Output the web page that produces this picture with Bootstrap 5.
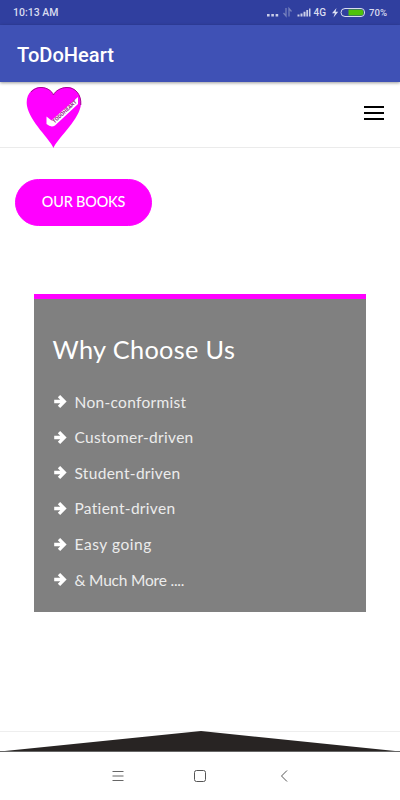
<!DOCTYPE html>
<html lang="en">
<head>
<meta charset="utf-8">
<meta name="viewport" content="width=device-width, initial-scale=1">
<title>ToDoHeart</title>
<link href="https://cdn.jsdelivr.net/npm/bootstrap@5.3.0/dist/css/bootstrap.min.css" rel="stylesheet">
<style>
body { font-family: Lato, "Liberation Sans", sans-serif; height: 800px; overflow: hidden; background: #fff; }
svg { display: block; flex: none; }
.status-bar { height: 25px; background: #303f9f; color: #d9dcef; font: 500 10.5px/26px Roboto, sans-serif; padding: 0 13px; }
.status-bar .network { font-size: 10px; }
.status-bar .percent { font-size: 9.6px; }
.app-bar { height: 57px; background: #3f51b5; color: #fff; font: 500 20.1px/60px Roboto, sans-serif; padding-left: 17px; box-shadow: 0 1px 3px rgba(0,0,0,.4); z-index: 2; }
.site-nav { height: 66px; border-bottom: 1px solid #ebebeb; padding: 0 16px 0 26px; }
.menu-toggle { margin-top: 23px; }
.btn-books { --bs-btn-color: #fff; --bs-btn-bg: #f0f; --bs-btn-border-color: #f0f; width: 137px; height: 47px; margin: 31px 0 0 15px; padding: 0; font-size: 14.4px; line-height: 43px; font-weight: 500; letter-spacing: -.15px; }
.why-card { --bs-card-border-radius: 0; --bs-card-bg: #808080; border: 0; border-top: 5px solid #f0f; margin: 68px 34px 0; height: 318px; padding: 0 18.5px; }
.why-title { font-size: 25.3px; line-height: 30px; margin: 35px 0 0; color: #fff; font-weight: 400; letter-spacing: .35px; }
.why-list { margin-top: 20.5px; font-size: 15.5px; color: #ececec; font-weight: 400; letter-spacing: .3px; }
.why-list li { height: 35.6px; gap: 8px; }
.why-list .going { letter-spacing: .55px; }
.why-list .more { letter-spacing: -.2px; }
.footer-area { margin-top: 118.500px; height: 21px; border-top: 1px solid #eee; }
.footer-area svg { margin-top: -1px; }
.system-nav { height: 48px; }
.system-nav svg { margin: 0 35px; }
.system-nav .recents { margin: 0 33px 0 37px; }
</style>
</head>
<body class="d-flex flex-column">
<div class="status-bar d-flex justify-content-between flex-shrink-0">
  <span>10:13 AM</span>
  <div class="d-flex align-items-center">
    <svg width="47" height="25" viewBox="0 0 47 25"><g fill="#c9cde8"><rect y="14" width="2.6" height="2.5"/><rect x="4.3" y="14" width="2.6" height="2.5"/><rect x="8.6" y="14" width="2.6" height="2.5"/><path d="M30.5 14.5h2v2h-2zM33.5 13.5h2v3h-2zM36.5 11.7h2v4.8h-2zM39.3 10h1.8v6.500h-1.800zM42 8.500h1.500v8h-1.500z"/></g><path d="M19 8v8l-2.500-3M22 16.500v-8l2.500 3" fill="none" stroke="#7580bd" stroke-width="1.300"/></svg>
    <span class="network">4G</span>
    <svg width="43" height="25" viewBox="-1 0 43 25"><path d="M9.500 8 5 13.200h2.900L6.500 17.500l4.700-5.700H8.500z" fill="#dfe2f4"/><path d="M18 8.500h16a3.500 3.500 0 0 1 3.500 3.500v1a3.500 3.500 0 0 1-3.500 3.500H18a4 4 0 0 1 0-8z" fill="none" stroke="#d9dcef"/><path d="M21.500 9.500H34A2.500 2.500 0 0 1 36.500 12v1a2.500 2.500 0 0 1-2.500 2.500H21.500z" fill="#4fc20b"/></svg>
    <span class="percent">70%</span>
  </div>
</div>
<header class="app-bar flex-shrink-0 position-relative">ToDoHeart</header>
<nav class="site-nav d-flex justify-content-between flex-shrink-0">
  <svg width="57" height="66" viewBox="0 0 57 66">
    <path d="M27.500 66C24 57 4 40 1 24C-1 12 7 5 15 5C21 5 26 9 27.500 13C29 9 35 5 41 5C49 5 57 13 54.500 25C51 40 31 57 27.500 66z" fill="#f0f"/>
    <path d="M5 10C8 7 11 5.500 15 5.500C21 5.500 26 9 27.500 13C29 9 35 5.500 41 5.500C49 5.500 55.500 12 54.800 23" fill="none" stroke="#a20a8f"/>
    <path d="M20.500 34.500L25.500 38.500L52 15V22L29 43.500Q25 46 20.500 42z" fill="#fff"/>
    <text transform="translate(28.500 41.500) rotate(-43)" font-family="Roboto" font-size="5.300" font-weight="700" fill="#92248b" textLength="31">TODOHEART</text>
  </svg>
  <svg class="menu-toggle" width="20" height="17" viewBox="0 0 20 17"><path d="M0 2h20M0 8h20M0 14h20" stroke="#000" stroke-width="2"/></svg>
</nav>
<main>
  <a class="btn btn-books rounded-pill">OUR BOOKS</a>
  <section class="card why-card">
    <h2 class="why-title">Why Choose Us</h2>
    <ul class="why-list list-unstyled mb-0">
      <li class="d-flex align-items-center"><svg width="14" height="16" viewBox="0 0 14 16"><path d="M1.200 7.500H11M6 2.200 11.300 7.500 6 12.800" fill="none" stroke="#fff" stroke-width="3.300"/></svg><span>Non-conformist</span></li>
      <li class="d-flex align-items-center"><svg width="14" height="16" viewBox="0 0 14 16"><path d="M1.200 7.500H11M6 2.200 11.300 7.500 6 12.800" fill="none" stroke="#fff" stroke-width="3.300"/></svg><span>Customer-driven</span></li>
      <li class="d-flex align-items-center"><svg width="14" height="16" viewBox="0 0 14 16"><path d="M1.200 7.500H11M6 2.200 11.300 7.500 6 12.800" fill="none" stroke="#fff" stroke-width="3.300"/></svg><span>Student-driven</span></li>
      <li class="d-flex align-items-center"><svg width="14" height="16" viewBox="0 0 14 16"><path d="M1.200 7.500H11M6 2.200 11.300 7.500 6 12.800" fill="none" stroke="#fff" stroke-width="3.300"/></svg><span>Patient-driven</span></li>
      <li class="d-flex align-items-center"><svg width="14" height="16" viewBox="0 0 14 16"><path d="M1.200 7.500H11M6 2.200 11.300 7.500 6 12.800" fill="none" stroke="#fff" stroke-width="3.300"/></svg><span class="going">Easy going</span></li>
      <li class="d-flex align-items-center"><svg width="14" height="16" viewBox="0 0 14 16"><path d="M1.200 7.500H11M6 2.200 11.300 7.500 6 12.800" fill="none" stroke="#fff" stroke-width="3.300"/></svg><span class="more">&amp; Much More ....</span></li>
    </ul>
  </section>
</main>
<footer class="footer-area flex-shrink-0"><svg width="400" height="21" viewBox="0 0 400 21"><path d="M0 20.500 201 0 400 20.500V21H0z" fill="#282423"/><path d="M0 20.500H400" stroke="#666"/></svg></footer>
<div class="system-nav d-flex justify-content-center align-items-center flex-shrink-0">
  <svg class="recents" width="14" height="14" viewBox="0 0 14 14"><path d="M1.500 2.500h11M1.500 7h11M1.500 11.500h11" stroke="#666"/></svg>
  <svg width="14" height="14" viewBox="0 0 14 14"><rect x="1.500" y="1.500" width="11" height="11" rx="2" fill="none" stroke="#555"/></svg>
  <svg width="14" height="14" viewBox="0 0 14 14"><path d="M10 1.500 4.500 7l5.500 5.500" fill="none" stroke="#555"/></svg>
</div>
<script src="https://cdn.jsdelivr.net/npm/bootstrap@5.3.0/dist/js/bootstrap.bundle.min.js"></script>
</body>
</html>
